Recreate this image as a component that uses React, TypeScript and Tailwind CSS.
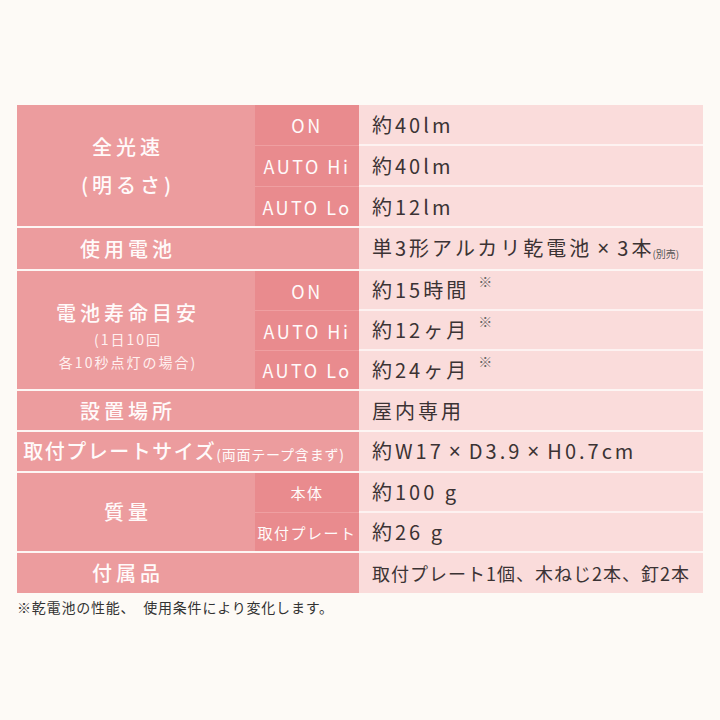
import React from "react";

const LABEL = "bg-[#ec9c9e]";
const SUB = "bg-[#e98b8e]";
const VAL = "bg-[#fadcdb]";

type Sub = { sub?: React.ReactNode; value: React.ReactNode; h: string };

function Mark() {
  return <span className="ml-[9px] relative -top-[9px] text-[14px] text-[#666] tracking-normal">※</span>;
}

function Group({
  label,
  rows,
  span,
  last,
}: {
  label: React.ReactNode;
  rows: Sub[];
  span?: boolean;
  last?: boolean;
}) {
  const sep = last ? "" : "border-b-2 border-[#fdf6f4]";
  return (
    <div className={`flex ${sep}`}>
      <div
        className={`${LABEL} ${span ? "w-[342px]" : "w-[238px] pr-[16px]"} flex flex-col items-center justify-center text-[#fffafa]`}
      >
        {label}
      </div>
      <div className="flex flex-1 flex-col">
        {rows.map((r, i) => {
          const notLast = i < rows.length - 1;
          return (
            <div key={i} className={`flex ${r.h}`}>
              {!span && (
                <div
                  className={`w-[104px] flex items-center justify-center ${r.sub ? SUB : LABEL} text-[#fffafa] ${
                    notLast ? "border-b border-[#ef9fa1]" : ""
                  }`}
                >
                  {r.sub}
                </div>
              )}
              <div
                className={`flex-1 ${VAL} flex items-center pl-[13px] text-[#3b3334] ${
                  notLast ? "border-b-2 border-[#fdf2f1]" : ""
                }`}
              >
                {r.value}
              </div>
            </div>
          );
        })}
      </div>
    </div>
  );
}

const V = ({ children }: { children: React.ReactNode }) => (
  <span className="text-[20px] tracking-[3px] leading-none whitespace-pre">{children}</span>
);
const S = ({ children }: { children: React.ReactNode }) => (
  <span className="text-[18px] tracking-[2.5px] leading-none">{children}</span>
);
const SS = ({ children }: { children: React.ReactNode }) => (
  <span className="text-[15px] tracking-[1.5px] leading-none">{children}</span>
);
const L = ({ children }: { children: React.ReactNode }) => (
  <span className="text-[20px] tracking-[4px] font-medium">{children}</span>
);

const X = () => <span className="ml-[5px] mr-[5px] font-['Noto_Sans',sans-serif] text-[21px]">×</span>;

export default function App() {
  return (
    <div className="min-h-[720px] w-[720px] bg-[#fdfaf6] pt-[105px] font-['Noto_Sans_CJK_JP','Noto_Sans',sans-serif]">
      <div className="ml-[17px] w-[686px] flex flex-col">
        <Group
          label={
            <div className="flex flex-col items-center leading-[38px]">
              <L>全光速</L>
              <L>(明るさ)</L>
            </div>
          }
          rows={[
            { sub: <S>ON</S>, value: <V>約40lm</V>, h: "h-[41px]" },
            { sub: <S>AUTO Hi</S>, value: <V>約40lm</V>, h: "h-[41px]" },
            { sub: <S>AUTO Lo</S>, value: <V>約12lm</V>, h: "h-[39px]" },
          ]}
        />
        <Group
          label={<L>使用電池</L>}
          rows={[
            {
              value: (
                <span className="flex items-end">
                  <V>
                    単3形アルカリ乾電池
                    <X />
                    3本
                  </V>
                  <span className="text-[10px] leading-none text-[#555] -ml-[2px]">(別売)</span>
                </span>
              ),
              h: "h-[41px]",
            },
          ]}
        />
        <Group
          label={
            <div className="flex flex-col items-center pt-[12px]">
              <span className="text-[20px] tracking-[4px] font-medium leading-[30px]">電池寿命目安</span>
              <span className="text-[14px] tracking-[2px] leading-[23px] text-[#fff0f0]">(1日10回</span>
              <span className="text-[14px] tracking-[2px] leading-[23px] text-[#fff0f0]">各10秒点灯の場合)</span>
            </div>
          }
          rows={[
            {
              sub: <S>ON</S>,
              value: (
                <span className="flex items-center">
                  <V>約15時間</V>
                  <Mark />
                </span>
              ),
              h: "h-[40px]",
            },
            {
              sub: <S>AUTO Hi</S>,
              value: (
                <span className="flex items-center">
                  <V>約12ヶ月</V>
                  <Mark />
                </span>
              ),
              h: "h-[40px]",
            },
            {
              sub: <S>AUTO Lo</S>,
              value: (
                <span className="flex items-center">
                  <V>約24ヶ月</V>
                  <Mark />
                </span>
              ),
              h: "h-[38px]",
            },
          ]}
        />
        <Group label={<L>設置場所</L>} rows={[{ value: <V>屋内専用</V>, h: "h-[39px]" }]} />
        <Group
          span
          label={
            <div className="flex items-end pb-[2px] pr-[8px]">
              <span className="text-[20px] tracking-[1.5px] font-medium leading-none">取付プレートサイズ</span>
              <span className="text-[14px] tracking-[0.8px] leading-none">(両面テープ含まず)</span>
            </div>
          }
          rows={[
            {
              value: (
                <V>
                  約W17
                  <X />
                  D3.9
                  <X />
                  H0.7cm
                </V>
              ),
              h: "h-[39px]",
            },
          ]}
        />
        <Group
          label={<L>質量</L>}
          rows={[
            { sub: <SS>本体</SS>, value: <V>約100 g</V>, h: "h-[40px]" },
            { sub: <SS>取付プレート</SS>, value: <V>約26 g</V>, h: "h-[38px]" },
          ]}
        />
        <Group
          last
          label={<L>付属品</L>}
          rows={[
            {
              value: (
                <span className="text-[18px] tracking-[1px] leading-none">取付プレート1個、木ねじ2本、釘2本</span>
              ),
              h: "h-[40px]",
            },
          ]}
        />
        <div className="pt-[5px] text-[14px] leading-[18px] text-[#333] tracking-[0.8px]">
          ※乾電池の性能、　使用条件により変化します。
        </div>
      </div>
    </div>
  );
}
